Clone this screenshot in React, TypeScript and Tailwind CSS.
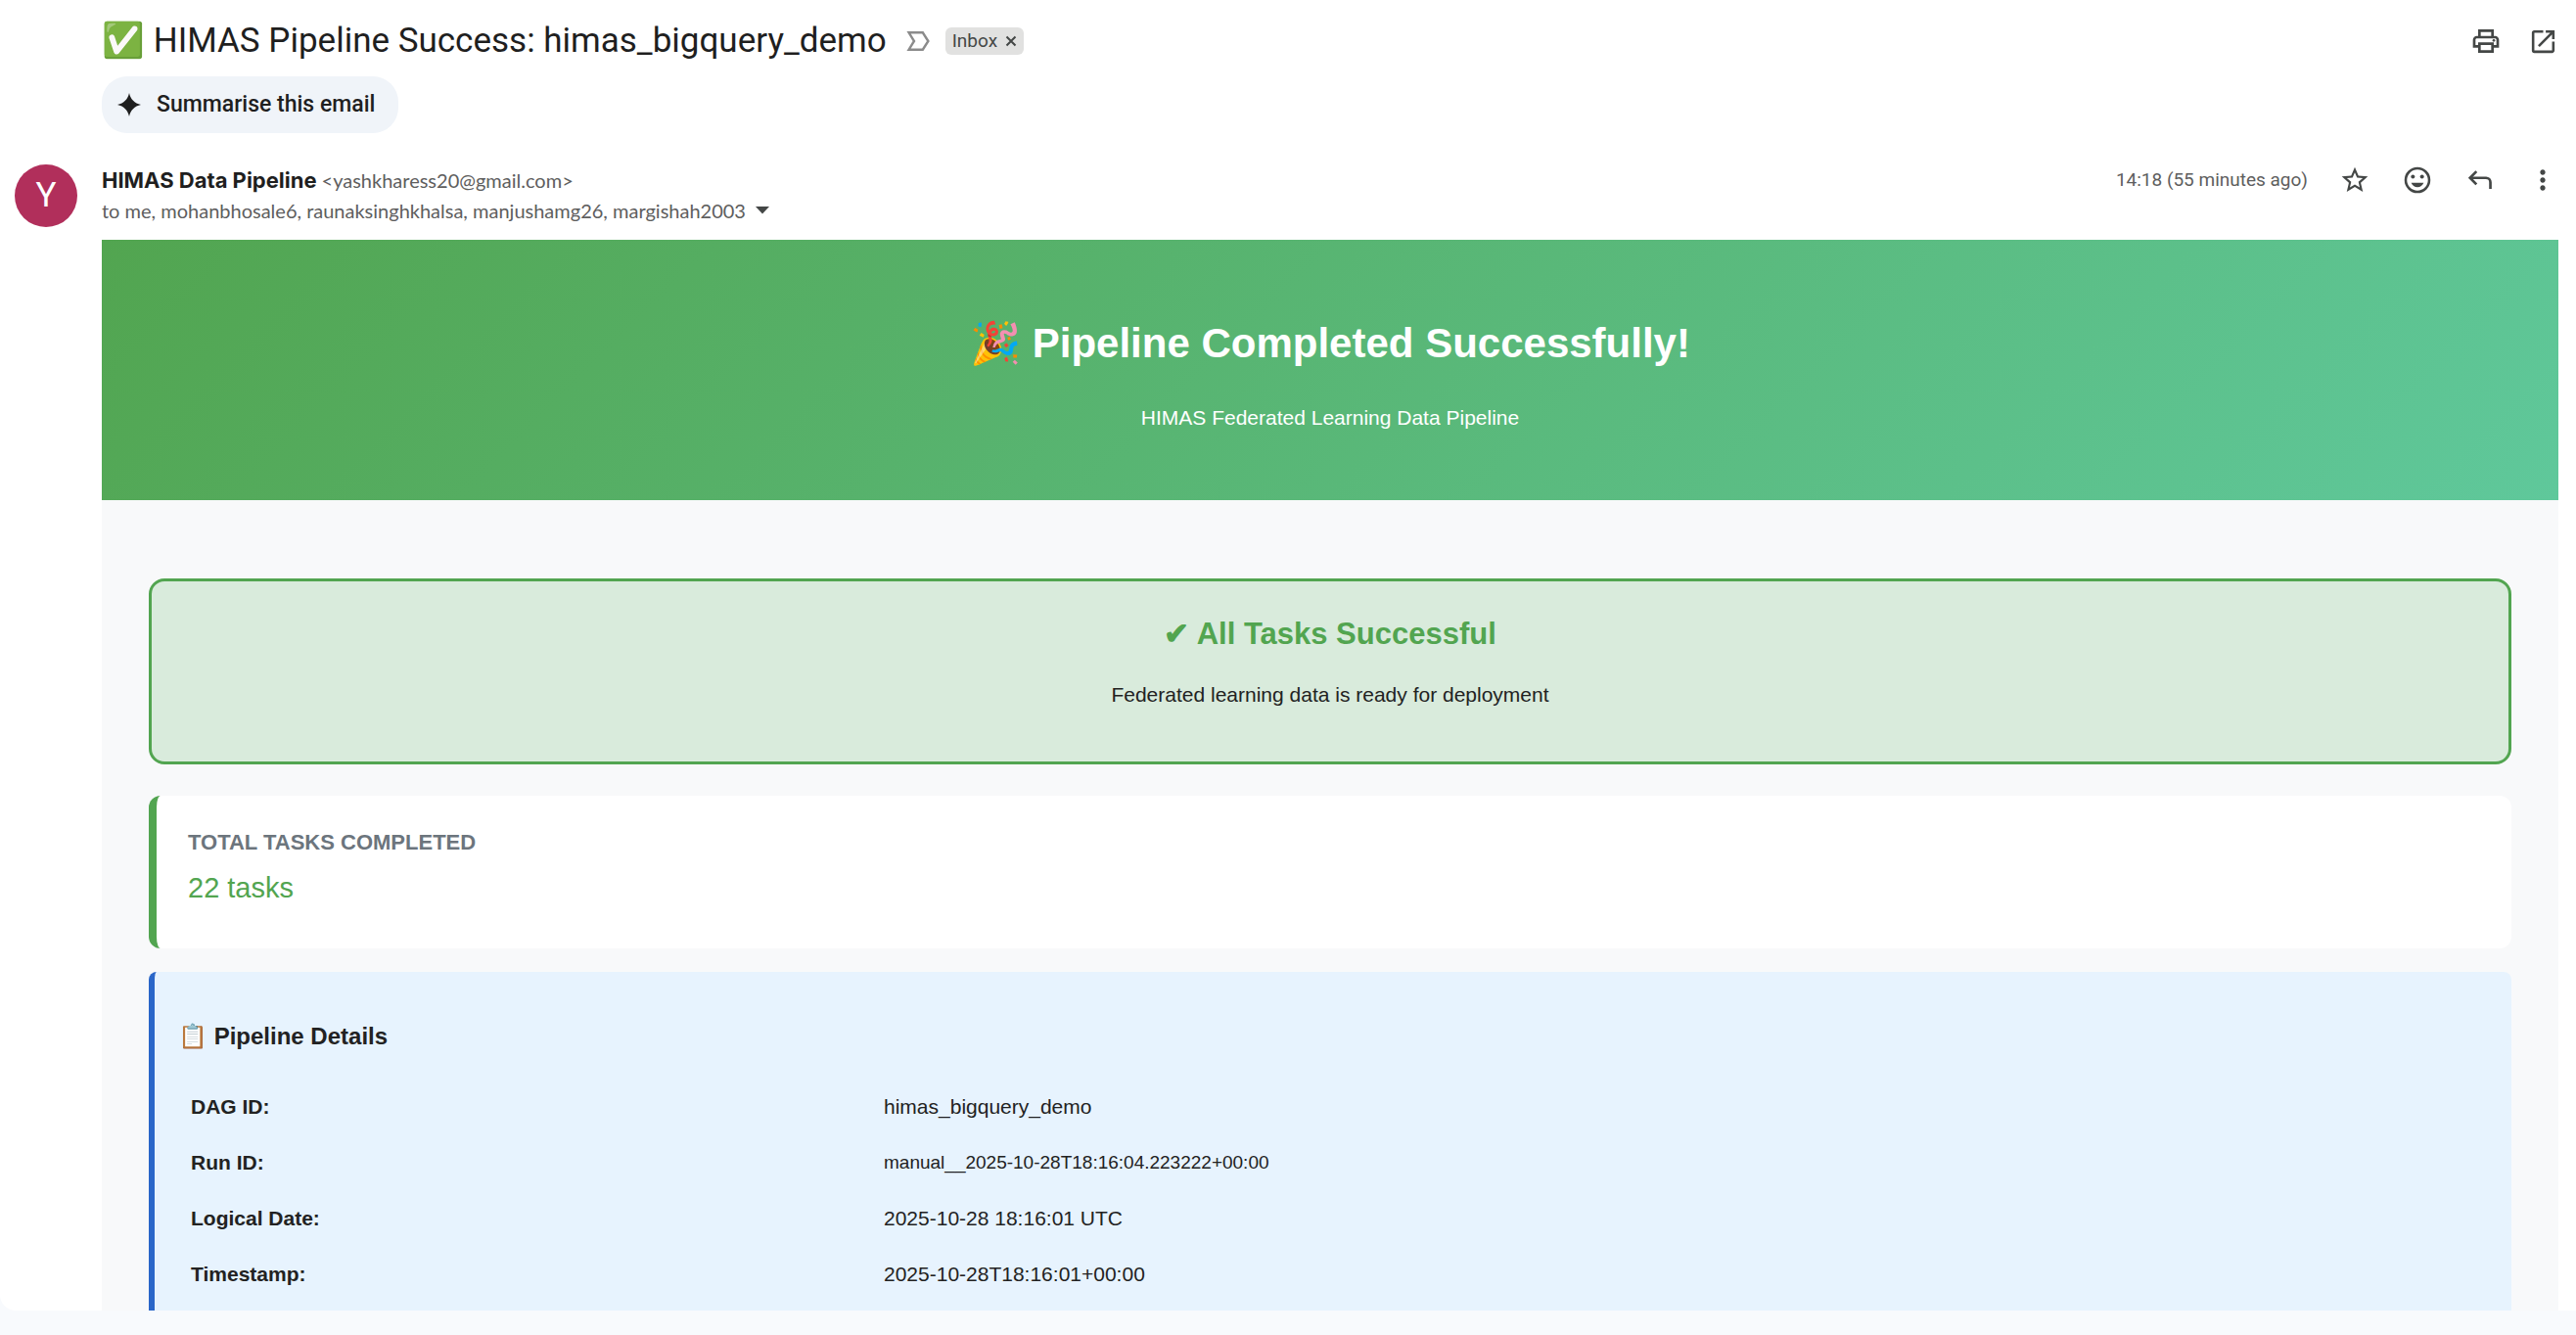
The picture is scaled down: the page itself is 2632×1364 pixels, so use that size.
import type { ReactNode } from 'react';
import { MdMoreVert, MdOpenInNew, MdOutlinePrint, MdStarBorder } from 'react-icons/md';

const details = [
  { label: 'DAG ID:', value: 'himas_bigquery_demo', small: false },
  { label: 'Run ID:', value: 'manual__2025-10-28T18:16:04.223222+00:00', small: true },
  { label: 'Logical Date:', value: '2025-10-28 18:16:01 UTC', small: false },
  { label: 'Timestamp:', value: '2025-10-28T18:16:01+00:00', small: false },
];

function IconButton({ label, children }: { label: string; children: ReactNode }) {
  return (
    <button type="button" aria-label={label} className="flex size-8 items-center justify-center text-[#444746]">
      {children}
    </button>
  );
}

function SmileIcon() {
  return (
    <svg viewBox="0 0 24 24" className="size-8" fill="currentColor" aria-hidden="true">
      <circle cx="12" cy="12" r="9" fill="none" stroke="currentColor" strokeWidth="1.9" />
      <circle cx="8.5" cy="9.3" r="1.5" />
      <circle cx="15.5" cy="9.3" r="1.5" />
      <path d="M7.2 14h9.6c-.8 2-2.6 3.4-4.8 3.4S8 16 7.2 14z" />
    </svg>
  );
}

function ReplyIcon() {
  return (
    <svg viewBox="0 0 24 24" className="size-8" fill="none" stroke="currentColor" strokeWidth="2" aria-hidden="true">
      <path d="M9.2 5.3 4.3 10.3l4.9 5" />
      <path d="M4.3 10.3h12.2c1.9 0 3.4 1.5 3.4 3.4v5" />
    </svg>
  );
}

function ImportanceIcon() {
  return (
    <svg viewBox="0 0 24 20" className="h-5 w-6" fill="none" stroke="#8b8b8b" strokeWidth="2.4" aria-hidden="true">
      <path d="M2.6 1.3h14.2L22.4 10l-5.6 8.7H2.6L8 10z" />
    </svg>
  );
}

function EmailHeader() {
  return (
    <header className="font-[Lato,sans-serif] text-[#1f1f1f]">
      <div className="flex items-center pt-5 pr-[18px] pl-26">
        <h1 className="font-[Roboto,sans-serif] text-[35px] leading-11">✅ HIMAS Pipeline Success: himas_bigquery_demo</h1>
        <button type="button" aria-label="Mark as important" className="ml-5">
          <ImportanceIcon />
        </button>
        <div className="ml-4 flex h-7 items-center gap-2 rounded-md bg-[#e1e1e0] px-[7px] text-[#444746]">
          <span className="font-[Roboto,sans-serif] text-[19px] leading-6">Inbox</span>
          <button type="button" aria-label="Remove label Inbox">
            <svg viewBox="0 0 12 12" className="size-3" stroke="currentColor" strokeWidth="2" aria-hidden="true">
              <path d="M1.5 1.5l9 9M10.5 1.5l-9 9" />
            </svg>
          </button>
        </div>
        <div className="ml-auto flex gap-[26px]">
          <IconButton label="Print all">
            <MdOutlinePrint className="size-8" />
          </IconButton>
          <IconButton label="In new window">
            <MdOpenInNew className="size-[31px]" />
          </IconButton>
        </div>
      </div>

      <div className="pt-3.5 pl-26">
        <button
          type="button"
          className="flex h-[58px] items-center gap-4 rounded-[26px] bg-[#f0f4f9] pr-6 pl-4 font-[Roboto,sans-serif] text-[23px] leading-7 font-medium"
        >
          <svg viewBox="0 0 24 24" className="size-6" fill="currentColor" aria-hidden="true">
            <path d="M12 0c1.3 6.2 5.5 10.6 12 12-6.5 1.4-10.7 5.8-12 12-1.3-6.2-5.5-10.6-12-12C6.5 10.6 10.7 6.2 12 0z" />
          </svg>
          Summarise this email
        </button>
      </div>

      <div className="flex items-start pt-8 pr-[18px] pb-[13px] pl-[15px]">
        <div className="flex size-16 items-center justify-center rounded-full bg-[#b12f5b] font-[Roboto,sans-serif] text-[35px] leading-10 text-white">
          Y
        </div>
        <div className="ml-[25px] pt-0.5">
          <div className="flex items-baseline gap-[5px] leading-7">
            <span className="font-[Inter,sans-serif] text-[22px] font-bold">HIMAS Data Pipeline</span>
            <span className="text-[20px] text-[#5e5e5e]">&lt;yashkharess20@gmail.com&gt;</span>
          </div>
          <div className="mt-[3px] flex items-center gap-2.5 text-[20px] leading-7 text-[#5e5e5e]">
            <span>to me, mohanbhosale6, raunaksinghkhalsa, manjushamg26, margishah2003</span>
            <button type="button" aria-label="Show details">
              <svg viewBox="0 0 14 8" className="h-2 w-3.5" fill="#444746" aria-hidden="true">
                <path d="M0 0h14L7 7.5z" />
              </svg>
            </button>
          </div>
        </div>
        <div className="ml-auto flex items-center gap-8">
          <time className="font-[Roboto,sans-serif] text-[19px] leading-8 text-[#5e5e5e]">14:18 (55 minutes ago)</time>
          <IconButton label="Star">
            <MdStarBorder className="size-8" />
          </IconButton>
          <IconButton label="Add reaction">
            <SmileIcon />
          </IconButton>
          <IconButton label="Reply">
            <ReplyIcon />
          </IconButton>
          <IconButton label="More options">
            <MdMoreVert className="size-8" />
          </IconButton>
        </div>
      </div>
    </header>
  );
}

export default function App() {
  return (
    <div className="min-h-screen bg-[#f8fafd]">
      <main className="rounded-bl-2xl bg-white">
        <EmailHeader />

        <article className="mr-[18px] ml-26 bg-[#f8f9fa] font-['Liberation_Sans',Arial,sans-serif] text-[21px] leading-6 text-[#222222]">
          <div className="bg-[linear-gradient(135deg,#52a550_0%,#5fc89b_100%)] pt-[82px] pb-18 text-center text-white">
            <h2 className="text-[42px] leading-12 font-bold">🎉 Pipeline Completed Successfully!</h2>
            <p className="mt-10">HIMAS Federated Learning Data Pipeline</p>
          </div>

          <div className="px-12 pt-20">
            <section className="rounded-2xl border-3 border-[#52a550] bg-[#d9ebdc] pt-9 pb-14 text-center">
              <h3 className="text-[31px] leading-9 font-bold text-[#52a550]">✔ All Tasks Successful</h3>
              <p className="mt-8">Federated learning data is ready for deployment</p>
            </section>

            <section className="mt-8 rounded-xl border-l-8 border-[#52a550] bg-white px-8 pt-9 pb-11">
              <h3 className="text-[22px] font-bold text-[#6c757d]">TOTAL TASKS COMPLETED</h3>
              <p className="mt-4 text-[29px] leading-9 text-[#52a550]">22 tasks</p>
            </section>

            <section className="mt-6 rounded-t-lg border-l-6 border-[#2a66c8] bg-[#e7f3fe] px-6 pt-[52px] pb-[9px]">
              <h3 className="text-[24px] leading-7 font-bold">📋 Pipeline Details</h3>
              <table className="mt-[29px] w-full table-fixed text-left">
                <tbody>
                  {details.map((row) => (
                    <tr key={row.label} className="h-[57px]">
                      <th scope="row" className="w-[30%] px-[13px] font-bold">
                        {row.label}
                      </th>
                      <td className={row.small ? 'px-[13px] text-[19px]' : 'px-[13px]'}>{row.value}</td>
                    </tr>
                  ))}
                </tbody>
              </table>
            </section>
          </div>
        </article>
      </main>
    </div>
  );
}
